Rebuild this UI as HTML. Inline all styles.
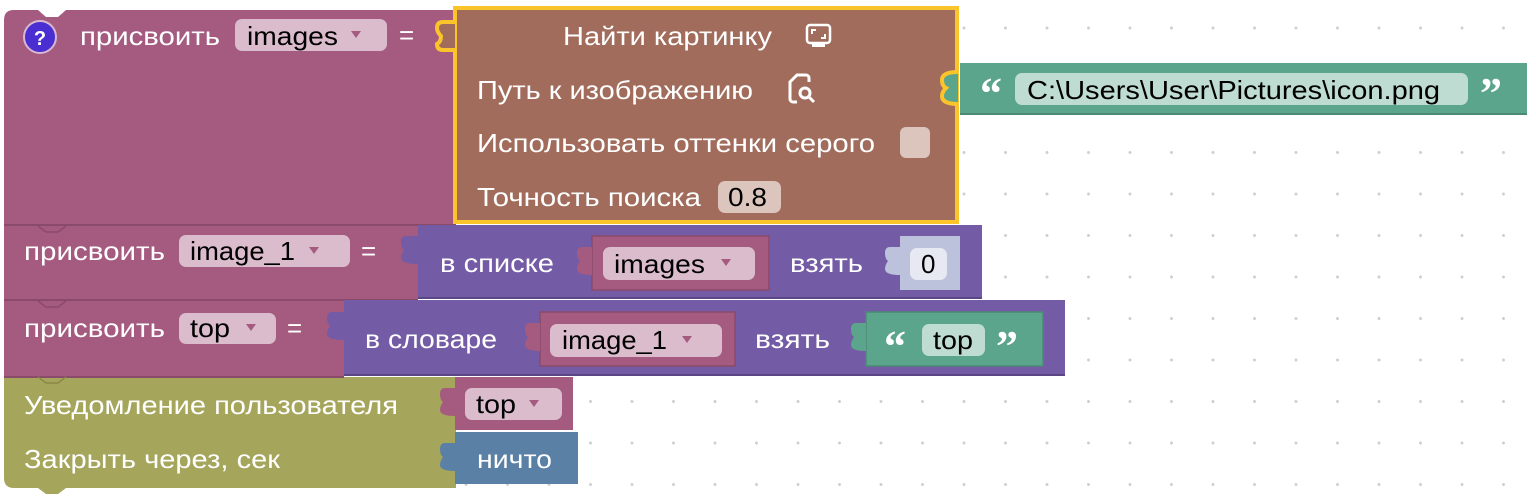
<!DOCTYPE html>
<html><head><meta charset="utf-8"><style>
html,body{margin:0;padding:0;background:#fff;width:1536px;height:501px;overflow:hidden}
svg{display:block}
text{font-family:"Liberation Sans",sans-serif;font-size:26px}
.w{fill:#fff}.b{fill:#000}
.q{font-family:"Liberation Serif",serif;font-weight:bold;font-size:44px;fill:#fff}
</style></head><body>
<svg width="1536" height="501" viewBox="0 0 1536 501">
<defs>
<pattern id="g" x="9" y="27.5" width="41.5" height="41.5" patternUnits="userSpaceOnUse">
<circle cx="0.5" cy="0.5" r="1.5" fill="#d0d0d0"/><circle cx="42" cy="0.5" r="1.5" fill="#d0d0d0"/><circle cx="0.5" cy="42" r="1.5" fill="#d0d0d0"/><circle cx="42" cy="42" r="1.5" fill="#d0d0d0"/>
</pattern>
</defs>
<rect width="1536" height="501" fill="url(#g)"/>

<path d="M4 20 Q4 10 14 10 H38 L46 17 H58 L66 10 H456 V226 H4 Z" fill="#a55b80"/>
<circle cx="40" cy="37" r="16" fill="#4a2ed2" stroke="#d7b8d0" stroke-width="2"/>
<text x="40" y="45" text-anchor="middle" class="w" style="font-weight:bold;font-size:20px">?</text>
<text x="80" y="45" class="w" textLength="140" lengthAdjust="spacingAndGlyphs">присвоить</text>
<rect x="235" y="19" width="152" height="32" rx="7" fill="#dbbccc"/>
<text x="247" y="45" class="b" textLength="91" lengthAdjust="spacingAndGlyphs">images</text>
<path d="M351 31 h10 l-5 7z" fill="#a55b80"/>
<text x="399" y="44" class="w">=</text>

<rect x="455" y="8" width="502" height="214" fill="#a16c5b" stroke="#fcc42b" stroke-width="4"/>
<path d="M455 22 H443 Q437 22 437 28 Q437 32 441 36 Q441 42 437 44 Q437 50 443 50 H455" fill="#a16c5b" stroke="#fcc42b" stroke-width="4"/>
<rect x="457" y="24" width="4" height="24" fill="#a16c5b"/>
<text x="563" y="45" class="w" textLength="209" lengthAdjust="spacingAndGlyphs">Найти картинку</text>
<rect x="807" y="25" width="23" height="18" rx="3" fill="none" stroke="#fff" stroke-width="2.5"/>
<rect x="812" y="44" width="13" height="3" fill="#fff"/>
<path d="M812 34 v-4 h4 M825 34 v4 h-4" stroke="#fff" stroke-width="2" fill="none"/>
<text x="477" y="99" class="w" textLength="276" lengthAdjust="spacingAndGlyphs">Путь к изображению</text>
<path d="M797 102 h-4 a3 3 0 0 1 -3 -3 v-17 l7 -7 h9 a3 3 0 0 1 3 3 v4" stroke="#fff" stroke-width="3" fill="none"/>
<circle cx="805" cy="93" r="5" stroke="#fff" stroke-width="3" fill="none"/>
<path d="M809 97 l5 5" stroke="#fff" stroke-width="3"/>
<text x="477" y="152" class="w" textLength="398" lengthAdjust="spacingAndGlyphs">Использовать оттенки серого</text>
<rect x="900" y="127" width="30" height="31" rx="6" fill="#dbc5bd"/>
<text x="477" y="206" class="w" textLength="224" lengthAdjust="spacingAndGlyphs">Точность поиска</text>
<rect x="718" y="181" width="63" height="32" rx="7" fill="#dbc5bd"/>
<text x="728" y="206" class="b" textLength="39" lengthAdjust="spacingAndGlyphs">0.8</text>

<rect x="960" y="63" width="567" height="52" fill="#5ba58c"/>
<rect x="960" y="113" width="567" height="2" fill="#4a8a73"/>
<path d="M958 72 Q942 72 942 80 Q942 86 946 88 Q942 92 942 96 Q942 104 958 104" fill="#5ba58c" stroke="#fcc42b" stroke-width="4"/>
<text x="980" y="108" class="q">“</text>
<rect x="1015" y="73" width="453" height="32" rx="7" fill="#bedcd1"/>
<text x="1027" y="99" class="b" textLength="413" lengthAdjust="spacingAndGlyphs">C:\Users\User\Pictures\icon.png</text>
<text x="1480" y="108" class="q">”</text>

<rect x="4" y="226" width="414" height="74" fill="#a55b80"/>
<path d="M38 226 L46 232 H58 L66 226" stroke="#8a4a6a" stroke-width="1.5" fill="none"/>
<rect x="4" y="224" width="452" height="2" fill="#8a4a6a"/>
<text x="24" y="260" class="w" textLength="141" lengthAdjust="spacingAndGlyphs">присвоить</text>
<rect x="179" y="235" width="171" height="32" rx="7" fill="#dbbccc"/>
<text x="190" y="260" class="b" textLength="105" lengthAdjust="spacingAndGlyphs">image_1</text>
<path d="M309 247 h10 l-5 7z" fill="#a55b80"/>
<text x="361" y="260" class="w">=</text>
<rect x="418" y="225" width="564" height="74" fill="#745ba5"/>
<rect x="418" y="297" width="564" height="2" fill="#5a4585"/>
<path d="M418 236 H406 Q401 236 401 242 Q401 248 404 250 Q401 254 401 258 Q401 264 418 264" fill="#745ba5"/>
<text x="440" y="272" class="w" textLength="114" lengthAdjust="spacingAndGlyphs">в списке</text>
<rect x="592" y="236" width="177" height="54" fill="#a55b80" stroke="#8a4a6a" stroke-width="1.5"/>
<path d="M592 247 H582 Q577 247 577 253 Q577 259 580 261 Q577 265 577 269 Q577 275 592 275" fill="#a55b80"/>
<rect x="603" y="247" width="152" height="33" rx="7" fill="#dbbccc"/>
<text x="614" y="273" class="b" textLength="91" lengthAdjust="spacingAndGlyphs">images</text>
<path d="M721 259 h10 l-5 7z" fill="#a55b80"/>
<text x="790" y="272" class="w" textLength="73" lengthAdjust="spacingAndGlyphs">взять</text>
<rect x="900" y="236" width="60" height="54" fill="#bdc2dc"/>
<path d="M900 247 H890 Q885 247 885 253 Q885 259 888 261 Q885 265 885 269 Q885 275 900 275" fill="#bdc2dc"/>
<rect x="910" y="248" width="37" height="32" rx="7" fill="#e6e8f2"/>
<text x="921" y="273" class="b">0</text>

<rect x="4" y="300" width="340" height="77" fill="#a55b80"/>
<rect x="4" y="299" width="414" height="2" fill="#8a4a6a"/>
<path d="M38 301 L46 307 H58 L66 301" stroke="#8a4a6a" stroke-width="1.5" fill="none"/>
<text x="24" y="337" class="w" textLength="141" lengthAdjust="spacingAndGlyphs">присвоить</text>
<rect x="179" y="313" width="97" height="31" rx="7" fill="#dbbccc"/>
<text x="190" y="337" class="b" textLength="40" lengthAdjust="spacingAndGlyphs">top</text>
<path d="M246 324 h10 l-5 7z" fill="#a55b80"/>
<text x="287" y="337" class="w">=</text>
<rect x="344" y="300" width="721" height="76" fill="#745ba5"/>
<rect x="344" y="374" width="721" height="2" fill="#5a4585"/>
<path d="M344 312 H332 Q327 312 327 318 Q327 324 330 326 Q327 330 327 334 Q327 340 344 340" fill="#745ba5"/>
<text x="365" y="348" class="w" textLength="132" lengthAdjust="spacingAndGlyphs">в словаре</text>
<rect x="540" y="312" width="195" height="54" fill="#a55b80" stroke="#8a4a6a" stroke-width="1.5"/>
<path d="M540 323 H530 Q525 323 525 329 Q525 335 528 337 Q525 341 525 345 Q525 351 540 351" fill="#a55b80"/>
<rect x="550" y="324" width="172" height="33" rx="7" fill="#dbbccc"/>
<text x="562" y="349" class="b" textLength="105" lengthAdjust="spacingAndGlyphs">image_1</text>
<path d="M682 336 h10 l-5 7z" fill="#a55b80"/>
<text x="755" y="348" class="w" textLength="75" lengthAdjust="spacingAndGlyphs">взять</text>
<rect x="866" y="312" width="177" height="54" fill="#5ba58c" stroke="#4a8a73" stroke-width="1.5"/>
<path d="M866 323 H856 Q851 323 851 329 Q851 335 854 337 Q851 341 851 345 Q851 351 866 351" fill="#5ba58c"/>
<text x="884" y="361" class="q">“</text>
<rect x="922" y="324" width="63" height="32" rx="7" fill="#bedcd1"/>
<text x="933" y="349" class="b" textLength="40" lengthAdjust="spacingAndGlyphs">top</text>
<text x="996" y="361" class="q">”</text>

<path d="M4 377 H456 V488 H66 L58 494 H46 L38 488 H14 Q4 488 4 478 Z" fill="#a5a55b"/>
<rect x="4" y="376" width="340" height="2" fill="#8a4a6a"/>
<path d="M38 377 L46 383 H58 L66 377" stroke="#8a8a48" stroke-width="1.5" fill="none"/>
<text x="24" y="414" class="w" textLength="374" lengthAdjust="spacingAndGlyphs">Уведомление пользователя</text>
<text x="24" y="468" class="w" textLength="256" lengthAdjust="spacingAndGlyphs">Закрыть через, сек</text>
<rect x="455" y="377" width="118" height="53" fill="#a55b80"/>
<path d="M455 388 H445 Q440 388 440 394 Q440 400 443 402 Q440 406 440 410 Q440 416 455 416" fill="#a55b80"/>
<rect x="465" y="388" width="97" height="32" rx="7" fill="#dbbccc"/>
<text x="476" y="413" class="b" textLength="40" lengthAdjust="spacingAndGlyphs">top</text>
<path d="M529 400 h10 l-5 7z" fill="#a55b80"/>
<rect x="455" y="432" width="123" height="52" fill="#5b80a5"/>
<path d="M455 443 H445 Q440 443 440 449 Q440 455 443 457 Q440 461 440 465 Q440 471 455 471" fill="#5b80a5"/>
<text x="477" y="468" class="w" textLength="75" lengthAdjust="spacingAndGlyphs">ничто</text>
</svg>
</body></html>
